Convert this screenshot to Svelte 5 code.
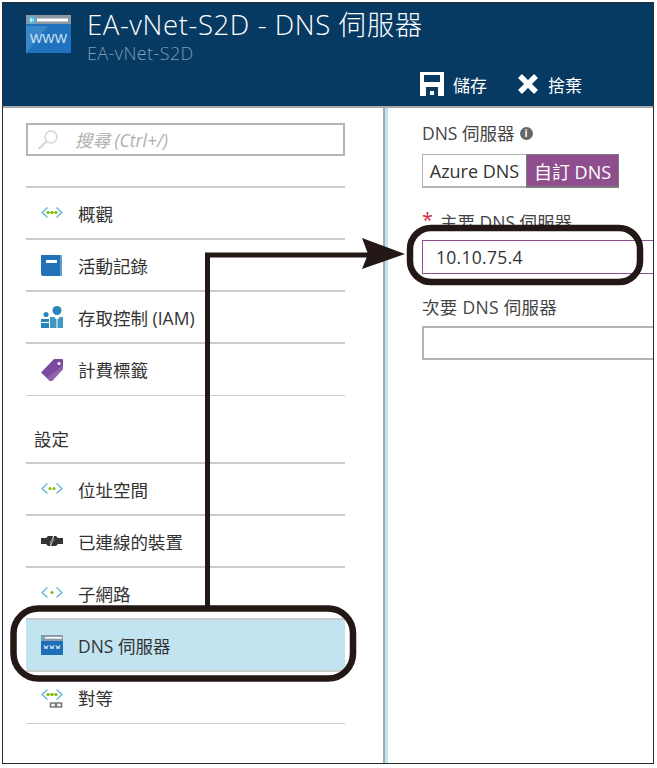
<script>
  const topItems = [
    { icon: 'net', dots: 3, label: '概觀' },
    { icon: 'book', label: '活動記錄' },
    { icon: 'iam', label: '存取控制 (IAM)' },
    { icon: 'tag', label: '計費標籤' },
  ];
  const settingItems = [
    { icon: 'net', dots: 2, label: '位址空間' },
    { icon: 'link', label: '已連線的裝置' },
    { icon: 'net', dots: 1, label: '子網路' },
    { icon: 'www', label: 'DNS 伺服器', active: true },
    { icon: 'peer', dots: 3, label: '對等' },
  ];

  // x offsets of the green dots inside the network glyph
  const dotSpots = { 1: [11], 2: [9, 13], 3: [7, 11, 15] };
</script>

{#snippet netGlyph(dots)}
  <path d="M6.5 4.5 L1 9.5 L6.5 14.5 M15.5 4.5 L21 9.5 L15.5 14.5" fill="none" stroke="#59b4d9" stroke-width="1.2" />
  {#if dots === 3}
    <path d="M6 9.5h10" stroke="#a6d36a" stroke-width="1.6" />
  {/if}
  {#each dotSpots[dots] as cx}
    <circle {cx} cy="9.5" r="1.5" fill="#7fba00" />
  {/each}
{/snippet}

{#snippet icon(item)}
  <svg class="row-icon" viewBox="0 0 22 22" aria-hidden="true">
    {#if item.icon === 'net'}
      <g transform="translate(0 1)">{@render netGlyph(item.dots)}</g>
    {:else if item.icon === 'peer'}
      <g transform="translate(0 -2)">{@render netGlyph(item.dots)}</g>
      <path d="M9.5 16h5v4h-5z M15.5 16h5v4h-5z" fill="none" stroke="#7a7a7a" stroke-width="1.6" />
    {:else if item.icon === 'book'}
      <path d="M0 1h21v21H2a2 2 0 0 1-2-2z" fill="#2272b9" />
      <path d="M19 1h2v21h-2z" fill="#5f9fd0" />
      <path d="M5 6h11v3H5z" fill="#fff" />
    {:else if item.icon === 'iam'}
      <circle cx="16" cy="4.5" r="4.5" fill="#2a86b8" />
      <path d="M9 11h14v11H9z" fill="#3f97c2" />
      <path d="M13 11l3 3 3-3z" fill="#fff" />
      <path d="M15.5 14h1v8h-1z" fill="#fff" />
      <circle cx="5" cy="8.5" r="2.6" fill="#2a86b8" />
      <path d="M0 13h8v9H0z" fill="#2a86b8" />
      <path d="M0 16h8v1H0z" fill="#fff" />
    {:else if item.icon === 'tag'}
      <path d="M13 0h8a1 1 0 0 1 1 1v9L10 23 0 13.5z" fill="#7a4a9e" />
      <path d="M22 6v4L10 23 6 19z" fill="#8f62ae" />
      <circle cx="18" cy="4.5" r="1.6" fill="#fff" />
    {:else if item.icon === 'link'}
      <path d="M0 8h5l2-2h5l-3 10H7l-2-2H0z" fill="#333" />
      <path d="M22 8h-5l-2-2h-2l-3 10h5l2-2h5z" fill="#333" />
      <path d="M11 9h3l-3 4H8z" fill="#888" />
    {:else if item.icon === 'www'}
      <path d="M0 1h22v20H0z" fill="#1e6fb8" />
      <path d="M0 1h22v6H0z" fill="#8d9aa3" />
      <path d="M4 3h17v1.6H4z" fill="#fff" />
      <circle cx="2" cy="4" r="1.5" fill="#59b4d9" />
      <path d="M3 11l1 4 1-3 1 3 1-4M9 11l1 4 1-3 1 3 1-4M15 11l1 4 1-3 1 3 1-4" fill="none" stroke="#cfe3f2" stroke-width="0.9" />
    {/if}
  </svg>
{/snippet}

{#snippet row(item)}
  <li class="row" class:active={item.active}>
    <span class="icon-cell">{@render icon(item)}</span>
    <span>{item.label}</span>
  </li>
{/snippet}

<div class="page">
  <div class="window">
    <header class="blade-header">
      <div class="title-row">
        <svg class="title-icon" viewBox="0 0 45 38" aria-hidden="true">
          <path d="M0 0h45v38H0z" fill="#1f72bd" />
          <path d="M0 38 L22 11 H0z" fill="#3a87c9" />
          <path d="M0 0h45v9H0z" fill="#8b98a1" />
          <path d="M11 3.5h31v3H11z" fill="#fff" />
          <circle cx="6" cy="5" r="4" fill="#59b4d9" />
          <path d="M8 5H4M6 3L4 5l2 2" fill="none" stroke="#fff" stroke-width="1" />
          <text class="www" x="22.5" y="28">WWW</text>
        </svg>
        <div class="title-text">
          <h1>EA-vNet-S2D - DNS 伺服器</h1>
          <p>EA-vNet-S2D</p>
        </div>
      </div>
      <div class="toolbar">
        <span class="tool">
          <svg class="save" viewBox="0 0 24 24" aria-hidden="true">
            <path fill-rule="evenodd" d="M0 0h24v24H0z M4 3v7h16V3z M6 15v9h12v-9z" fill="#fff" />
            <path d="M10 19h4v4h-4z" fill="#fff" />
          </svg>
          儲存
        </span>
        <span class="tool">
          <svg class="discard" viewBox="0 0 22 22" aria-hidden="true">
            <path d="M3 3L19 19M19 3L3 19" stroke="#fff" stroke-width="5.5" />
          </svg>
          捨棄
        </span>
      </div>
    </header>

    <div class="blade-body">
      <aside class="sidebar">
        <div class="search">
          <svg class="lens" viewBox="0 0 22 20" aria-hidden="true">
            <circle cx="14" cy="7" r="6" fill="none" stroke="#d4d4d4" stroke-width="1.4" />
            <path d="M9.5 11.5L1.5 19" stroke="#d4d4d4" stroke-width="2" />
          </svg>
          <span>搜尋 (Ctrl+/)</span>
        </div>
        <ul class="menu">
          {#each topItems as item}
            {@render row(item)}
          {/each}
        </ul>
        <h2>設定</h2>
        <ul class="menu">
          {#each settingItems as item}
            {@render row(item)}
          {/each}
        </ul>
      </aside>

      <main class="content">
        <div class="label">DNS 伺服器 <span class="info">i</span></div>
        <div class="toggle">
          <span class="option">Azure DNS</span>
          <span class="option selected">自訂 DNS</span>
        </div>
        <div class="label primary"><span class="star">*</span>主要 DNS 伺服器</div>
        <div class="field filled">10.10.75.4</div>
        <div class="label secondary">次要 DNS 伺服器</div>
        <div class="field"></div>
      </main>
    </div>
  </div>

  <!-- callout drawn over the screenshot -->
  <svg class="callouts" viewBox="0 0 657 768" aria-hidden="true">
    <rect x="410" y="228" width="230" height="54" rx="21" />
    <rect x="13.5" y="608.5" width="339.5" height="70" rx="25" />
    <path d="M207.5 606V255H370" />
    <path class="head" d="M405 254L362 238L368 254L362 269z" />
  </svg>
</div>

<style>
  :global(body) {
    margin: 0;
    background: #fff;
  }

  .page {
    position: relative;
    width: 657px;
    height: 768px;
    overflow: hidden;
    font-family: "Open Sans", "Noto Sans CJK TC", sans-serif;
    color: #333;
  }

  .window {
    box-sizing: border-box;
    width: 652px;
    height: 762px;
    margin: 2px 0 0 2px;
    border: 1px solid #2b2b2b;
    display: flex;
    flex-direction: column;
  }

  .blade-header {
    height: 103px;
    flex-shrink: 0;
    background: #063a63;
    color: #fff;
    display: flex;
    flex-direction: column;
  }

  .title-row {
    box-sizing: border-box;
    display: flex;
    gap: 16px;
    padding: 12px 0 0 23px;
    height: 57px;
  }

  .title-icon {
    width: 45px;
    height: 38px;
    flex-shrink: 0;
  }

  .www {
    font: 13px "Liberation Sans", sans-serif;
    fill: #d5e6f3;
    text-anchor: middle;
  }

  .title-text {
    margin-top: -4px;
  }

  h1 {
    margin: 0;
    font-size: 27.5px;
    font-weight: 300;
    letter-spacing: 0.6px;
    line-height: 28px;
    white-space: nowrap;
  }

  .title-row p {
    margin: 2px 0 0;
    font-size: 18px;
    font-weight: 300;
    letter-spacing: 0.4px;
    line-height: 24px;
    color: #7f9db5;
  }

  .toolbar {
    display: flex;
    gap: 30px;
    padding-left: 417px;
    align-items: center;
    font-size: 17px;
    height: 24px;
    margin-top: 12px;
  }

  .tool {
    display: flex;
    align-items: center;
    gap: 9px;
  }

  .save {
    width: 24px;
    height: 24px;
  }

  .discard {
    width: 22px;
    height: 22px;
  }

  .blade-body {
    flex: 1;
    min-height: 0;
    display: flex;
    border-top: 2px solid #a9a9a9;
  }

  .sidebar {
    box-sizing: border-box;
    width: 382px;
    flex-shrink: 0;
    padding: 15px 38px 0 23px;
    border-right: 2px solid #a9a9a9;
  }

  .search {
    box-sizing: border-box;
    height: 33px;
    display: flex;
    align-items: center;
    gap: 16px;
    padding-left: 9px;
    border: 2px solid #b5b5b5;
    font-size: 17.5px;
    font-style: italic;
    color: #b0b0b0;
    margin-bottom: 30px;
  }

  .lens {
    width: 22px;
    height: 20px;
  }

  .menu {
    list-style: none;
    margin: 0;
    padding: 0;
    border-top: 2px solid #ccc;
  }

  .row {
    box-sizing: border-box;
    height: 52px;
    display: flex;
    align-items: center;
    font-size: 17.5px;
    color: #333;
    border-bottom: 2px solid #ccc;
  }

  .row:last-child {
    border-bottom-width: 1px;
  }

  .row.active {
    background: #c2e3f0;
  }

  .icon-cell {
    width: 52px;
    padding-left: 15px;
    box-sizing: border-box;
    display: flex;
    flex-shrink: 0;
  }

  .row-icon {
    width: 22px;
    height: 22px;
  }

  h2 {
    margin: 0;
    height: 66px;
    box-sizing: border-box;
    padding: 32px 0 0 8px;
    font-size: 17.5px;
    font-weight: 400;
    line-height: 22px;
  }

  .content {
    flex: 1;
    min-width: 0;
    padding: 14px 0 0 34px;
    border-left: 3px solid #c0e4f5;
  }

  .label {
    display: flex;
    align-items: center;
    font-size: 17.5px;
    line-height: 22px;
    color: #444;
    gap: 5px;
  }

  .info {
    width: 13px;
    height: 13px;
    border-radius: 50%;
    background: #666;
    color: #fff;
    font-size: 10px;
    font-weight: 700;
    line-height: 13px;
    text-align: center;
  }

  .toggle {
    display: flex;
    width: 197px;
    height: 34px;
    margin-top: 10px;
    font-size: 18px;
  }

  .option {
    box-sizing: border-box;
    width: 104px;
    display: flex;
    align-items: center;
    justify-content: center;
    border: 1px solid #b3b3b3;
    border-bottom-width: 2px;
    border-right: 0;
    white-space: nowrap;
  }

  .option.selected {
    width: 93px;
    background: #8f4f8f;
    color: #fff;
    border: 1px solid #7d7d7d;
    border-bottom-width: 2px;
  }

  .primary {
    margin-top: 23px;
    gap: 0;
  }

  .star {
    width: 18px;
    color: #d9283f;
    font-size: 20px;
    line-height: 18px;
    height: 22px;
  }

  .field {
    box-sizing: border-box;
    height: 34px;
    margin-top: 8px;
    border: 2px solid #b3b3b3;
    border-right: 0;
  }

  .field.filled {
    display: flex;
    align-items: center;
    margin-top: 7px;
    padding-left: 13px;
    border-width: 1px 0 1px 1px;
    border-color: #8f4f8f;
    font-size: 17.5px;
    letter-spacing: 0.3px;
  }

  .secondary {
    margin-top: 22px;
    letter-spacing: 0.3px;
  }

  .callouts {
    position: absolute;
    inset: 0;
    width: 657px;
    height: 768px;
    pointer-events: none;
  }

  .callouts rect {
    fill: none;
    stroke: #231815;
    stroke-width: 6.5;
  }

  .callouts path {
    fill: none;
    stroke: #231815;
    stroke-width: 5;
  }

  .callouts .head {
    fill: #231815;
    stroke: none;
  }
</style>
